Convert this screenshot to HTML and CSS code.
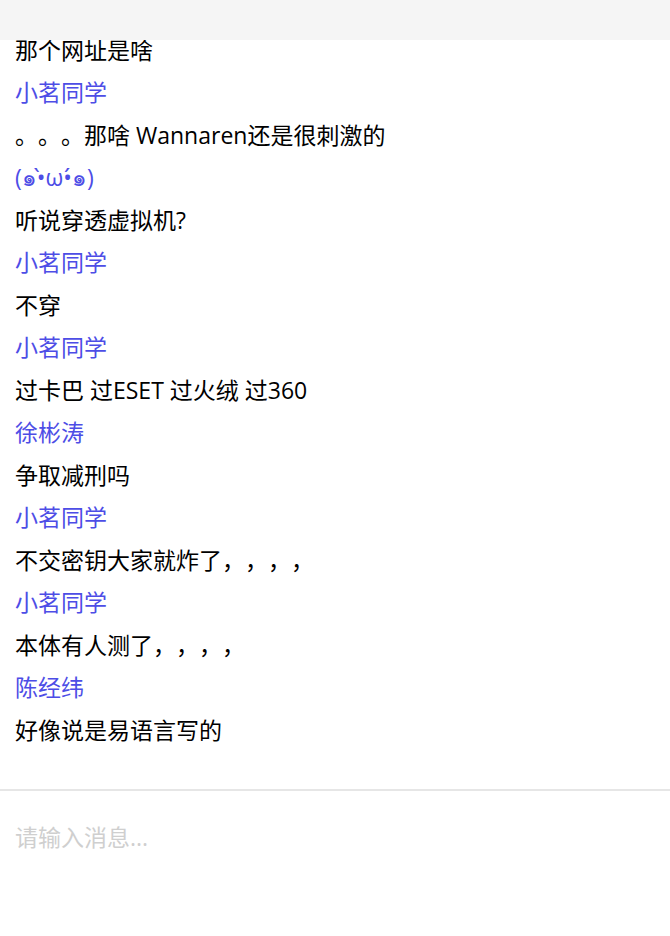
FILE: index.html
```html
<!DOCTYPE html>
<html lang="zh-CN">
<head>
<meta charset="utf-8">
<title>聊天</title>
<link rel="stylesheet" href="styles.css">
</head>
<body>
<div class="app">
  <div class="topbar"></div>
  <div class="messages">
    <div class="list">
      <div class="text">那个网址是啥</div>
      <div class="name">小茗同学</div>
      <div class="text"><span class="fw">。</span><span class="fw">。</span><span class="fw">。</span>那啥 Wannaren还是很刺激的</div>
      <div class="name">(๑•̀ω•́๑)</div>
      <div class="text">听说穿透虚拟机?</div>
      <div class="name">小茗同学</div>
      <div class="text">不穿</div>
      <div class="name">小茗同学</div>
      <div class="text">过卡巴 过ESET 过火绒 过360</div>
      <div class="name">徐彬涛</div>
      <div class="text">争取减刑吗</div>
      <div class="name">小茗同学</div>
      <div class="text">不交密钥大家就炸了<span class="fw">，</span><span class="fw">，</span><span class="fw">，</span><span class="fw">，</span></div>
      <div class="name">小茗同学</div>
      <div class="text">本体有人测了<span class="fw">，</span><span class="fw">，</span><span class="fw">，</span><span class="fw">，</span></div>
      <div class="name">陈经纬</div>
      <div class="text">好像说是易语言写的</div>
    </div>
  </div>
  <div class="composer">
    <div class="placeholder">请输入消息...</div>
  </div>
</div>
</body>
</html>
```

FILE: styles.css
```css
* { box-sizing: border-box; }
html, body {
  margin: 0;
  padding: 0;
  background: #ffffff;
}
body {
  font-family: "Open Sans", "Noto Sans CJK SC", sans-serif;
  font-size: 23px;
  color: #000;
}
.app {
  position: relative;
  height: 936px;
  display: flex;
  flex-direction: column;
  overflow: hidden;
}
.topbar {
  position: absolute;
  top: 0;
  left: 0;
  right: 0;
  height: 40px;
  background: #f5f5f5;
  z-index: 2;
}
.messages {
  flex: 1;
  overflow: hidden;
  display: flex;
  flex-direction: column;
  justify-content: flex-end;
  padding: 0 15px 38px;
}
.list {
  display: flex;
  flex-direction: column;
}
.name, .text {
  height: 42.5px;
  line-height: 42.5px;
  white-space: nowrap;
}
.name { color: #4d4de6; }
.text { color: #000; }
.fw {
  display: inline-block;
  width: 1em;
  line-height: 1;
  text-align: left;
}
.composer {
  height: 147px;
  border-top: 2px solid #e6e6e6;
  padding: 30px 15px 0;
}
.placeholder {
  color: #cfcfcf;
  line-height: 32px;
}
```
